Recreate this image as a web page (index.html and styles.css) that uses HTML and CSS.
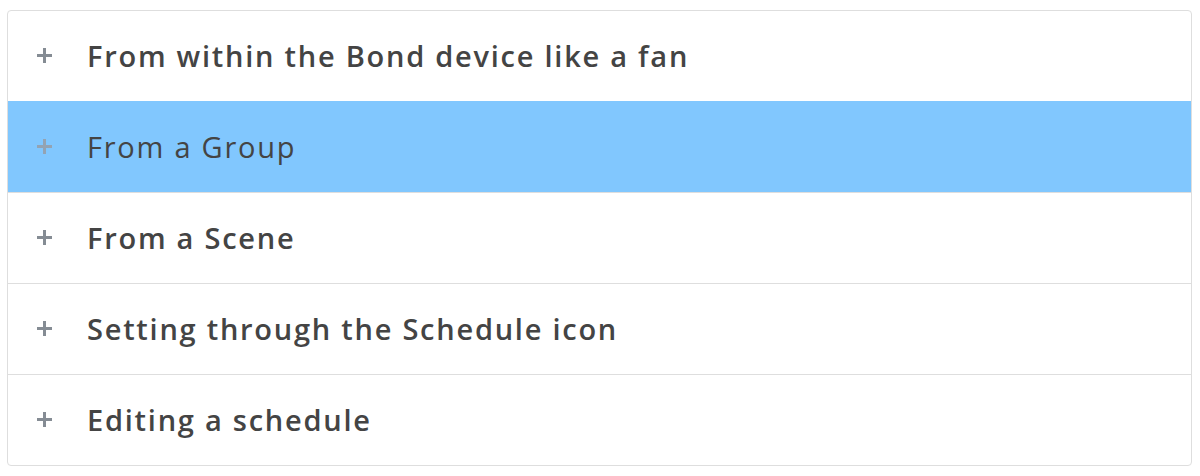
FILE: index.html
```html
<!DOCTYPE html>
<html>
<head>
<meta charset="utf-8">
<link rel="stylesheet" href="styles.css">
</head>
<body>
<div class="accordion">
  <div class="item"><span class="plus"></span><span class="title">From within the Bond device like a fan</span></div>
  <div class="item active"><span class="plus"></span><span class="title">From a Group</span></div>
  <div class="item"><span class="plus"></span><span class="title">From a Scene</span></div>
  <div class="item"><span class="plus"></span><span class="title">Setting through the Schedule icon</span></div>
  <div class="item"><span class="plus"></span><span class="title">Editing a schedule</span></div>
</div>
</body>
</html>
```
FILE: styles.css
```css
html, body { margin: 0; padding: 0; background: #fff; }
body { padding: 10px 8px 10px 7px; }
.accordion {
  border: 1px solid #dedede;
  border-radius: 4px;
  overflow: hidden;
}
.item {
  height: 90px;
  display: flex;
  align-items: center;
  border-top: 1px solid #dedede;
  font-family: "Open Sans", sans-serif;
  font-weight: 600;
  font-size: 29px;
  letter-spacing: 1.75px;
  color: #444;
}
.title { margin-top: -2px; }
.item:first-child { border-top: none; }
.item.active { background: #81c7fe; border-top-color: #81c7fe; font-weight: 500; }
.item.active + .item { border-top-color: #dedede; }
.plus {
  position: relative;
  width: 15px;
  height: 15px;
  margin-left: 29px;
  margin-right: 35px;
  margin-top: -1px;
  flex: none;
}
.plus::before, .plus::after {
  content: "";
  position: absolute;
  background: #858c94;
}
.plus::before { left: 0; right: 0; top: 6px; height: 3px; }
.plus::after { top: 0; bottom: 0; left: 6px; width: 3px; }
.active .plus::before, .active .plus::after { background: #93a3b3; }
```
